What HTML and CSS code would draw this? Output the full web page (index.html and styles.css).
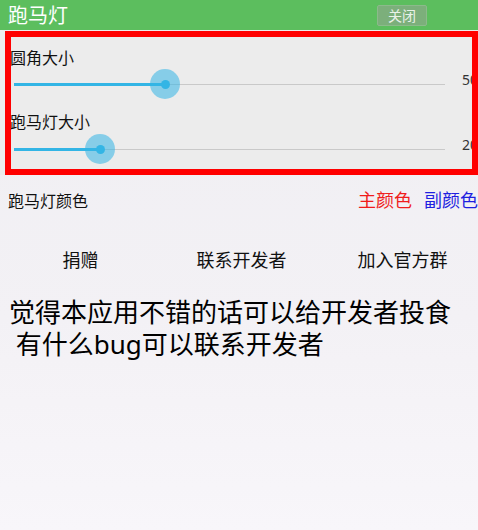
FILE: index.html
```html
<!DOCTYPE html>
<html lang="zh-CN">
<head>
<meta charset="utf-8">
<title>跑马灯</title>
<link rel="stylesheet" href="styles.css">
</head>
<body>
<div class="app">
  <header class="bar">
    <span class="title">跑马灯</span>
    <button class="close">关闭</button>
  </header>
  <section class="panel">
    <div class="label first">圆角大小</div>
    <div class="slider-row">
      <div class="slider">
        <div class="track"><div class="fill" style="width:151px"></div></div>
        <div class="thumb" style="left:151px"><span class="dot"></span></div>
      </div>
      <span class="value">50</span>
    </div>
    <div class="label second">跑马灯大小</div>
    <div class="slider-row">
      <div class="slider">
        <div class="track"><div class="fill" style="width:86px"></div></div>
        <div class="thumb" style="left:86px"><span class="dot"></span></div>
      </div>
      <span class="value">20</span>
    </div>
    <div class="highlight"></div>
  </section>
  <div class="color-row">
    <span class="color-label">跑马灯颜色</span>
    <span class="color main">主颜色</span>
    <span class="color sub">副颜色</span>
  </div>
  <div class="actions">
    <span class="action">捐赠</span>
    <span class="action">联系开发者</span>
    <span class="action">加入官方群</span>
  </div>
  <p class="note">觉得本应用不错的话可以给开发者投食
 有什么bug可以联系开发者</p>
</div>
</body>
</html>
```
FILE: styles.css
```css
* { box-sizing: border-box; }
html, body { margin: 0; padding: 0; }
body {
  width: 478px;
  height: 530px;
  overflow: hidden;
  font-family: "Noto Sans", "Noto Sans CJK SC", sans-serif;
  background: linear-gradient(#efeef2 0%, #f3f1f5 60%, #f8f6fa 100%);
  color: #1a1a1a;
}
.app { display: flex; flex-direction: column; height: 530px; }

.bar {
  height: 30px;
  background: #5cbe5e;
  display: flex;
  align-items: center;
  padding-left: 8px;
}
.title {
  color: #ffffff;
  font-size: 20px;
  line-height: 24px;
  margin-top: 2px;
}
.close {
  margin-left: auto;
  margin-right: 51px;
  width: 50px;
  height: 21px;
  margin-top: 1px;
  padding: 0;
  background: #7caf7b;
  border: 1px solid #8cba8b;
  border-radius: 2px;
  color: #e9f1e9;
  font-family: inherit;
  font-size: 14px;
  line-height: 19px;
}

.panel {
  position: relative;
  height: 145px;
  background: #ececec;
  padding-left: 10px;
  display: flex;
  flex-direction: column;
}
.label {
  font-size: 16px;
  line-height: 20px;
  height: 20px;
  color: #111111;
}
.label.first { margin-top: 18px; }
.label.second { margin-top: 13px; }
.slider-row {
  height: 30px;
  display: flex;
  align-items: center;
  margin-top: 1px;
}
.label.second + .slider-row { margin-top: 2px; }
.slider {
  position: relative;
  width: 431px;
  height: 30px;
  margin-left: 4px;
  display: flex;
  align-items: center;
}
.track {
  width: 100%;
  height: 1px;
  background: #c9c9c9;
  position: relative;
}
.fill {
  position: absolute;
  left: 0;
  top: -1px;
  height: 3px;
  background: #33b5e5;
}
.thumb {
  position: absolute;
  top: 0;
  width: 30px;
  height: 30px;
  margin-left: -15px;
  border-radius: 50%;
  background: rgba(51, 181, 229, 0.55);
  display: flex;
  align-items: center;
  justify-content: center;
}
.dot {
  width: 9px;
  height: 9px;
  border-radius: 50%;
  background: #33b5e5;
}
.value {
  margin-left: 17px;
  margin-bottom: 8px;
  font-size: 14px;
  line-height: 18px;
  color: #333333;
  white-space: nowrap;
}
.highlight {
  position: absolute;
  left: 5px;
  top: 1px;
  right: 0;
  bottom: 0;
  border: 6px solid #ff0000;
  pointer-events: none;
}

.color-row {
  height: 50px;
  display: flex;
  align-items: center;
  padding-left: 8px;
}
.color-label { font-size: 16px; color: #111111; margin-right: auto; }
.color { font-size: 18px; line-height: 24px; }
.color.main { color: #f01c1c; }
.color.sub { color: #1f1fe0; margin-left: 12px; }

.actions {
  display: grid;
  grid-template-columns: repeat(3, 161px);
  height: 48px;
  margin-top: 11px;
  align-items: center;
  justify-items: center;
  font-size: 18px;
  color: #111111;
}
.action { line-height: 24px; }

.note {
  margin: 12px 0 0 9px;
  font-size: 26px;
  line-height: 32px;
  white-space: pre-wrap;
  color: #000000;
}
```
